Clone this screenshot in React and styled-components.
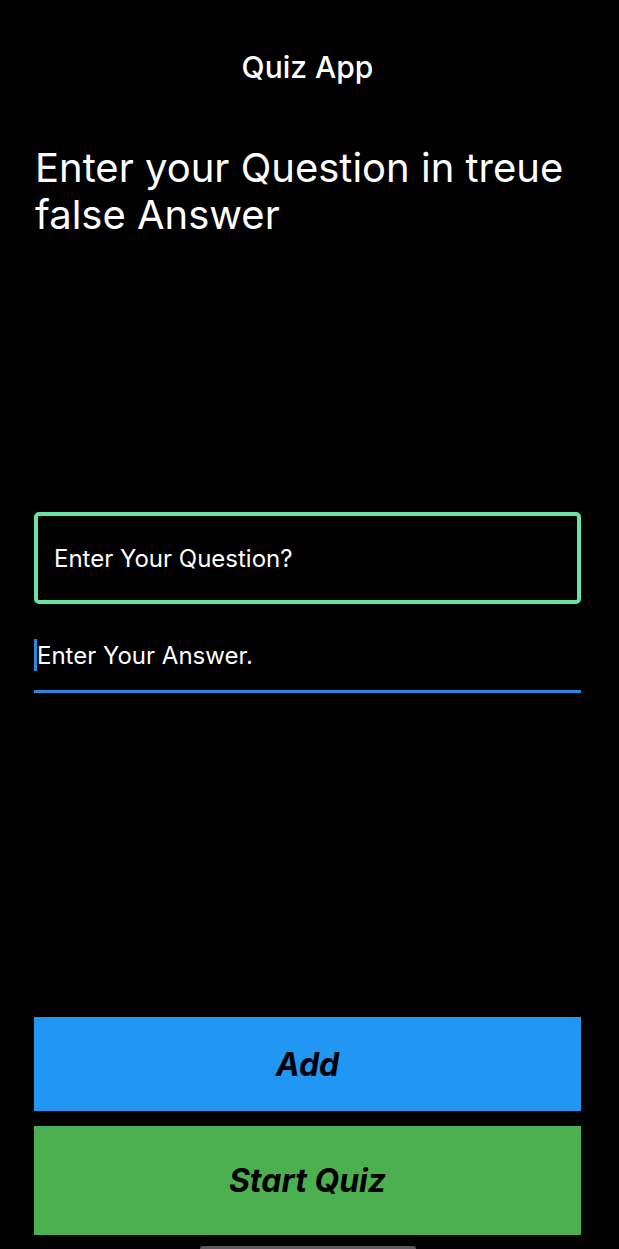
import React, { useState } from 'react';
import styled, { createGlobalStyle } from 'styled-components';

const GlobalStyle = createGlobalStyle`
    html, body {
        margin: 0;
        padding: 0;
        background: #000;
    }

    body {
        font-family: Inter, "Noto Sans", sans-serif;
        -webkit-font-smoothing: antialiased;
    }
`;

const Screen = styled.div`
    width: 619px;
    height: 1249px;
    background: #000;
    color: #fff;
    display: flex;
    flex-direction: column;
    padding: 0 38px 0 34px;
    box-sizing: border-box;
    overflow: hidden;
`;

const Title = styled.h1`
    margin: 50px 0 0;
    text-align: center;
    font-size: 30px;
    font-weight: 500;
    line-height: 34px;
`;

const Heading = styled.h2`
    margin: 60px 0 0 1px;
    font-size: 40px;
    font-weight: 400;
    line-height: 47px;
`;

const Form = styled.div`
    margin-top: 274px;
    display: flex;
    flex-direction: column;
`;

const QuestionInput = styled.input`
    box-sizing: border-box;
    width: 100%;
    height: 92px;
    border: 4px solid #69e4a6;
    border-radius: 5px;
    background: transparent;
    color: #fff;
    padding: 0 16px;
    font-family: inherit;
    font-size: 24px;
    outline: none;

    &::placeholder {
        color: #fff;
        opacity: 1;
    }
`;

const AnswerField = styled.label`
    box-sizing: border-box;
    margin-top: 34px;
    display: flex;
    align-items: flex-start;
    height: 55px;
    padding-top: 1px;
    border-bottom: 3px solid #2a88de;
`;

const Caret = styled.span`
    width: 3px;
    height: 32px;
    background: #2a88de;
    flex-shrink: 0;
`;

const AnswerInput = styled.input`
    flex: 1;
    height: 32px;
    border: 0;
    background: transparent;
    color: #fff;
    padding: 0;
    font-family: inherit;
    font-size: 24px;
    outline: none;

    &::placeholder {
        color: #fff;
        opacity: 1;
    }
`;

const Actions = styled.div`
    margin-top: auto;
    display: flex;
    flex-direction: column;
    gap: 15px;
`;

const ActionButton = styled.button`
    height: ${props => props.$height}px;
    border: 0;
    border-radius: 0;
    background: ${props => props.$color};
    color: #000;
    font-family: inherit;
    font-size: 32px;
    font-weight: 700;
    font-style: italic;
    cursor: pointer;
`;

const HomeBar = styled.div`
    align-self: center;
    width: 216px;
    height: 6px;
    border-radius: 3px;
    background: #5a5a5a;
    margin: 11px 0 -3px;
`;

function App() {
    const [question, setQuestion] = useState('');
    const [answer, setAnswer] = useState('');

    return (
        <>
            <GlobalStyle />
            <Screen>
                <Title>Quiz App</Title>
                <Heading>Enter your Question in treue false Answer</Heading>
                <Form>
                    <QuestionInput
                        placeholder="Enter Your Question?"
                        value={question}
                        onChange={e => setQuestion(e.target.value)}
                    />
                    <AnswerField>
                        <Caret />
                        <AnswerInput
                            placeholder="Enter Your Answer."
                            value={answer}
                            onChange={e => setAnswer(e.target.value)}
                        />
                    </AnswerField>
                </Form>
                <Actions>
                    <ActionButton type="button" $color="#2196f3" $height={94}>Add</ActionButton>
                    <ActionButton type="button" $color="#4caf50" $height={109}>Start Quiz</ActionButton>
                </Actions>
                <HomeBar />
            </Screen>
        </>
    );
}

export default App;
